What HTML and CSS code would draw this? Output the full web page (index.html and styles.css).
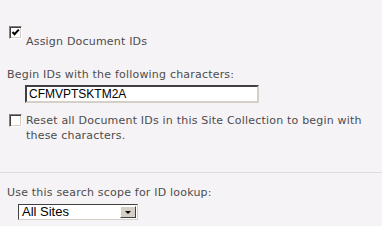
FILE: index.html
```html
<!DOCTYPE html>
<html lang="en">
  <head>
    <meta charset="utf-8">
    <title>Document ID settings</title>
    <link rel="stylesheet" href="styles.css">
  </head>
  <body>
    <div class="docIdPanel">
      <div class="assignRow">
        <span class="chk">
          <svg width="9" height="9" viewBox="0 0 9 9"><path d="M1.5 4 L3.5 6.2 L7.8 1.6" fill="none" stroke="#000" stroke-width="2"/></svg>
        </span>
        <span class="assignLabel">Assign Document IDs</span>
      </div>

      <p class="fieldLabel beginLabel">Begin IDs with the following characters:</p>
      <div class="txtBox">CFMVPTSKTM2A</div>

      <div class="resetRow">
        <span class="chk"></span>
        <span class="resetLabel">Reset all Document IDs in this Site Collection to begin with these characters.</span>
      </div>

      <div class="sep"></div>

      <p class="fieldLabel scopeLabel">Use this search scope for ID lookup:</p>
      <div class="ddl">
        <span class="ddlText">All Sites</span>
        <span class="ddlBtn"><span class="ddlArrow"></span></span>
      </div>
    </div>
  </body>
</html>
```

FILE: styles.css
```css
html, body {
  margin: 0;
  background-color: #f6f3f6;
}

.docIdPanel {
  font-family: "DejaVu Sans", Verdana, sans-serif;
  font-size: 11px;
  letter-spacing: 0.2px;
  color: #4c4c4c;
  padding-top: 26px;
}

.chk {
  display: flex;
  align-items: center;
  justify-content: center;
  box-sizing: border-box;
  width: 13px;
  height: 13px;
  flex: none;
  background: #fff;
  border-top: 1px solid #808080;
  border-left: 1px solid #808080;
  border-right: 1px solid #fff;
  border-bottom: 1px solid #fff;
  box-shadow: inset 1px 1px 0 #404040, inset -1px -1px 0 #d4d0c8;
}

.assignRow {
  display: flex;
  margin-left: 9px;
}

.assignLabel {
  margin-left: 4px;
  padding-top: 8px;
  line-height: 15px;
}

.fieldLabel {
  margin: 0;
  line-height: 15px;
  padding-left: 7px;
}

.beginLabel {
  margin-top: 18px;
}

.txtBox {
  box-sizing: border-box;
  width: 234px;
  height: 18px;
  margin: 3px 0 0 25px;
  background: #fff;
  border-top: 2px solid #404040;
  border-left: 2px solid #404040;
  border-right: 2px solid #d4d0c8;
  border-bottom: 2px solid #d4d0c8;
  font-family: "Liberation Sans", Arial, sans-serif;
  font-size: 12px;
  letter-spacing: 0;
  line-height: 14px;
  color: #000;
  padding-left: 2px;
}

.resetRow {
  display: flex;
  margin: 10px 0 0 9px;
}

.resetRow .chk {
  margin-top: 1px;
}

.resetLabel {
  margin-left: 4px;
  width: 340px;
  line-height: 15px;
}

.sep {
  height: 0;
  border-top: 1px solid #dcdcdc;
  margin-top: 29px;
}

.scopeLabel {
  margin-top: 12px;
}

.ddl {
  box-sizing: border-box;
  display: flex;
  width: 120px;
  height: 16px;
  margin: 4px 0 0 18px;
  background: #fff;
  border-top: 1px solid #404040;
  border-left: 1px solid #404040;
  border-right: 1px solid #d4d0c8;
  border-bottom: 1px solid #d4d0c8;
}

.ddlText {
  flex: 1;
  font-family: "Liberation Sans", Arial, sans-serif;
  font-size: 13px;
  letter-spacing: 0;
  line-height: 14px;
  color: #000;
  padding-left: 3px;
}

.ddlBtn {
  box-sizing: border-box;
  width: 16px;
  margin: 1px;
  background: #d4d0c8;
  border-top: 1px solid #fff;
  border-left: 1px solid #fff;
  border-right: 1px solid #404040;
  border-bottom: 1px solid #404040;
  display: flex;
  align-items: center;
  justify-content: center;
}

.ddlArrow {
  width: 0;
  height: 0;
  border-left: 3px solid transparent;
  border-right: 3px solid transparent;
  border-top: 3px solid #000;
}
```
